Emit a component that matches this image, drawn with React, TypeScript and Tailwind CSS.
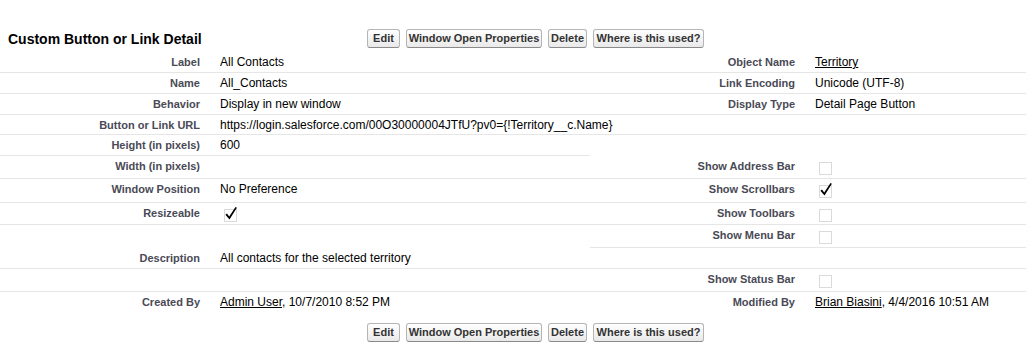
import type { ReactNode } from 'react'

const LABEL = 'text-right pr-[10px] pt-[3px] text-[11px] font-bold text-[#4a4a56] leading-[14px] whitespace-nowrap'
const DATA = 'pl-[10px] pt-[3px] text-[12px] text-black leading-[14px] whitespace-nowrap'
const LINE = 'border-b border-[#e6e6e6]'

function Box({ checked }: { checked?: boolean }) {
  return (
    <svg width="14" height="16" viewBox="0 0 14 16" className="block ml-[4px]">
      <rect x="0.5" y="3.5" width="12" height="12" fill="none" stroke="#b4b4b4" strokeDasharray="1 1" />
      {checked && <path d="M1.4 8.8 L3 7.6 L5.2 10.4 L11.5 0.9 L12.9 1.7 L5.5 13.4 Z" fill="#000" />}
    </svg>
  )
}

function Btns() {
  const btn = 'h-[19px] rounded-[3px] border border-[#b5b5b5] border-b-[#8a8a8a] bg-linear-to-b from-white to-[#e9e9e9] text-[11px] font-bold text-[#333] leading-none flex items-center justify-center'
  return (
    <div className="flex gap-[6px]">
      <button className={`${btn} w-[33px]`}>Edit</button>
      <button className={`${btn} w-[136px]`}>Window Open Properties</button>
      <button className={`${btn} w-[39px]`}>Delete</button>
      <button className={`${btn} w-[111px]`}>Where is this used?</button>
    </div>
  )
}

type Row = {
  h: string
  l1?: string; v1?: ReactNode; l2?: string; v2?: ReactNode
  left?: boolean; right?: boolean
}

const rows: Row[] = [
  { h: 'h-[21px]', l1: 'Label', v1: 'All Contacts', l2: 'Object Name', v2: <span className="underline">Territory</span>, left: true, right: true },
  { h: 'h-[21px]', l1: 'Name', v1: 'All_Contacts', l2: 'Link Encoding', v2: 'Unicode (UTF-8)', left: true, right: true },
  { h: 'h-[21px]', l1: 'Behavior', v1: 'Display in new window', l2: 'Display Type', v2: 'Detail Page Button', left: true, right: true },
  { h: 'h-[20px]', l1: 'Button or Link URL', v1: 'https://login.salesforce.com/00O30000004JTfU?pv0={!Territory__c.Name}', left: true, right: true },
  { h: 'h-[21px]', l1: 'Height (in pixels)', v1: '600', left: true },
  { h: 'h-[23px]', l1: 'Width (in pixels)', l2: 'Show Address Bar', v2: <Box />, left: true, right: true },
  { h: 'h-[24px]', l1: 'Window Position', v1: 'No Preference', l2: 'Show Scrollbars', v2: <Box checked />, left: true, right: true },
  { h: 'h-[22px]', l1: 'Resizeable', v1: <Box checked />, l2: 'Show Toolbars', v2: <Box />, left: true, right: true },
  { h: 'h-[23px]', l2: 'Show Menu Bar', v2: <Box />, right: true },
  { h: 'h-[21px]', l1: 'Description', v1: 'All contacts for the selected territory', left: true, right: true },
  { h: 'h-[23px]', l2: 'Show Status Bar', v2: <Box />, left: true, right: true },
  {
    h: 'h-[21px]',
    l1: 'Created By', v1: <><span className="underline">Admin User</span>, 10/7/2010 8:52 PM</>,
    l2: 'Modified By', v2: <><span className="underline">Brian Biasini</span>, 4/4/2016 10:51 AM</>,
  },
]

export default function App() {
  return (
    <div className="w-[1026px] h-[350px] bg-white pt-[29px] font-['Liberation_Sans',Arial,sans-serif] overflow-hidden">
      <div className="flex items-center h-[19px]">
        <h2 className="w-[367px] pl-[8px] text-[14px] font-bold text-black leading-[16px]">Custom Button or Link Detail</h2>
        <Btns />
      </div>

      <div className="mt-[4px]">
        {rows.map((r, i) => (
          <div key={i} className={`grid grid-cols-[210px_380px_215px_1fr] ${r.h}`}>
            <div className={`${LABEL} ${r.left ? LINE : ''}`}>{r.l1}</div>
            <div className={`${DATA} ${r.left ? LINE : ''}`}>{r.v1}</div>
            <div className={`${LABEL} ${r.right ? LINE : ''}`}>{r.l2}</div>
            <div className={`${DATA} ${r.right ? LINE : ''}`}>{r.v2}</div>
          </div>
        ))}
      </div>

      <div className="mt-[10px] pl-[367px]">
        <Btns />
      </div>
    </div>
  )
}
